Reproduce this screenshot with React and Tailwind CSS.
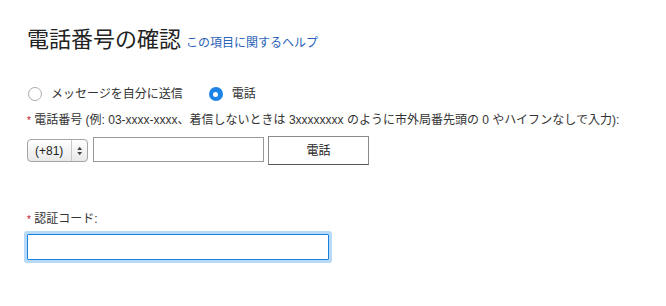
import React, { useState } from 'react';

const font = { fontFamily: '"Liberation Sans", "Noto Sans CJK JP", sans-serif' };

// Native-looking radio circle
const Radio = ({ checked, onClick, label }) => (
  <label className="flex items-center cursor-pointer" onClick={onClick}>
    {checked ? (
      <span className="w-[14px] h-[14px] rounded-full bg-[#1b84e6] flex items-center justify-center">
        <span className="w-[5px] h-[5px] rounded-full bg-white" />
      </span>
    ) : (
      <span className="w-[14px] h-[14px] rounded-full border border-[#aaaaaa] bg-white" />
    )}
    <span className="ml-[9px] text-[12px] text-[#333]">{label}</span>
  </label>
);

const App = () => {
  const [mode, setMode] = useState('phone');
  const [phone, setPhone] = useState('');
  const [code, setCode] = useState('');

  return (
    <div className="w-[666px] h-[306px] bg-white pt-[26px] pl-[27px]" style={font}>
      {/* Title */}
      <div className="flex items-baseline h-[28px]">
        <h1 className="text-[22px] leading-[28px] text-[#222] font-normal">電話番号の確認</h1>
        <a href="#" className="ml-[5px] text-[12px] text-[#2a62b8]">
          この項目に関するヘルプ
        </a>
      </div>

      {/* Delivery method */}
      <div className="flex items-center h-[16px] mt-[32px] pl-[1px]">
        <Radio
          checked={mode === 'sms'}
          onClick={() => setMode('sms')}
          label="メッセージを自分に送信"
        />
        <div className="ml-[26px]">
          <Radio checked={mode === 'phone'} onClick={() => setMode('phone')} label="電話" />
        </div>
      </div>

      <div className="mt-[10px] h-[16px] leading-[16px] text-[12px] text-[#333]">
        <span className="text-[#c4132a] text-[10px]">*</span> 電話番号 (例: 03-xxxx-xxxx、着信しないときは 3xxxxxxxx のように市外局番先頭の 0 やハイフンなしで入力):
      </div>

      {/* Phone row */}
      <div className="flex items-start mt-[8px]">
        <div className="mt-[3px] h-[23px] w-[61px] flex items-center border border-[#a5a5a5] rounded-[4px] bg-gradient-to-b from-white to-[#e9e9e9] text-[12px] text-[#222]">
          <span className="pl-[7px] w-[44px]">(+81)</span>
          <span className="h-full border-l border-[#c8c8c8]" />
          <svg width="16" height="12" viewBox="0 0 16 12" className="ml-[0px]">
            <path d="M8 1.5 L10.5 5 L5.5 5 Z" fill="#444" />
            <path d="M8 10.5 L10.5 7 L5.5 7 Z" fill="#444" />
          </svg>
        </div>
        <input
          value={phone}
          onChange={(e) => setPhone(e.target.value)}
          className="ml-[5px] mt-[1px] w-[171px] h-[25px] border border-[#999] outline-none px-1 text-[12px]"
        />
        <button
          type="button"
          className="ml-[4px] w-[101px] h-[29px] border border-[#8a8a8a] border-b-[#555] bg-white text-[12px] text-[#222]"
        >
          電話
        </button>
      </div>

      {/* Code */}
      <div className="mt-[46px] h-[16px] leading-[16px] text-[12px] text-[#333]">
        <span className="text-[#c4132a] text-[10px]">*</span> 認証コード:
      </div>
      <input
        value={code}
        onChange={(e) => setCode(e.target.value)}
        className="block mt-[7px] w-[302px] h-[26px] border border-[#1a7fdf] rounded-[1px] shadow-[0_0_0_3px_#b6d9f8] outline-none px-1 text-[12px]"
      />
    </div>
  );
};

export default App;
